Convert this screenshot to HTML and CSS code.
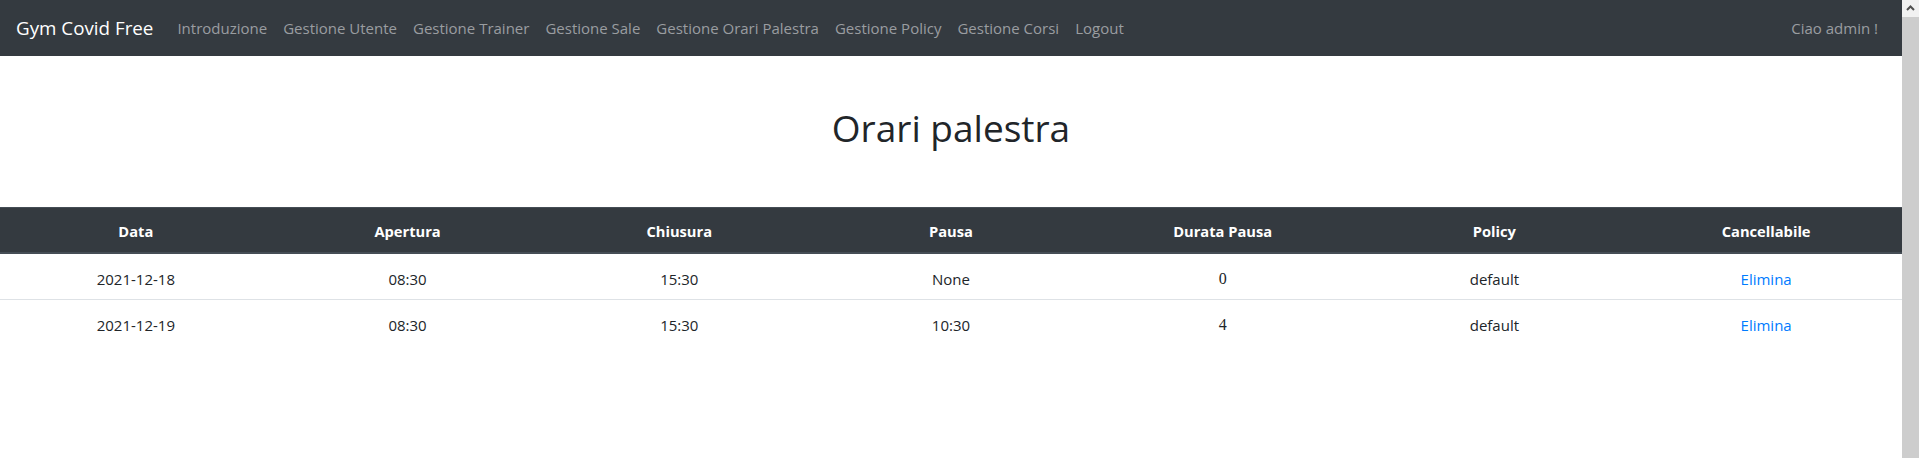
FILE: index.html
```html
<!DOCTYPE html>
<html lang="it">
<head>
<meta charset="utf-8">
<title>Orari palestra</title>
<link rel="stylesheet" href="styles.css">
</head>
<body>
<div class="page">
  <nav class="navbar">
    <a class="brand" href="#">Gym Covid Free</a>
    <ul class="nav">
      <li><a class="nav-link" href="#">Introduzione</a></li>
      <li><a class="nav-link" href="#">Gestione Utente</a></li>
      <li><a class="nav-link" href="#">Gestione Trainer</a></li>
      <li><a class="nav-link" href="#">Gestione Sale</a></li>
      <li><a class="nav-link" href="#">Gestione Orari Palestra</a></li>
      <li><a class="nav-link" href="#">Gestione Policy</a></li>
      <li><a class="nav-link" href="#">Gestione Corsi</a></li>
      <li><a class="nav-link" href="#">Logout</a></li>
    </ul>
    <ul class="nav nav-right">
      <li><span class="nav-link">Ciao admin !</span></li>
    </ul>
  </nav>

  <section class="title-block">
    <h1 class="title">Orari palestra</h1>
  </section>

  <table class="table">
    <thead>
      <tr>
        <th>Data</th>
        <th>Apertura</th>
        <th>Chiusura</th>
        <th>Pausa</th>
        <th>Durata Pausa</th>
        <th>Policy</th>
        <th>Cancellabile</th>
      </tr>
    </thead>
    <tbody>
      <tr>
        <td>2021-12-18</td>
        <td>08:30</td>
        <td>15:30</td>
        <td>None</td>
        <td class="num">0</td>
        <td>default</td>
        <td><a class="link" href="#">Elimina</a></td>
      </tr>
      <tr>
        <td>2021-12-19</td>
        <td>08:30</td>
        <td>15:30</td>
        <td>10:30</td>
        <td class="num">4</td>
        <td>default</td>
        <td><a class="link" href="#">Elimina</a></td>
      </tr>
    </tbody>
  </table>
</div>
<div class="scrollbar" aria-hidden="true">
  <div class="scroll-btn">
    <svg width="17" height="17" viewBox="0 0 17 17"><path d="M5 10 L8.5 6.5 L12 10" fill="none" stroke="#505050" stroke-width="2"/></svg>
  </div>
  <div class="scroll-thumb"></div>
</div>
</body>
</html>
```

FILE: styles.css
```css
body {
  margin: 0;
  display: flex;
  min-height: 458px;
  font-family: "Open Sans", "Noto Sans", sans-serif;
  font-size: 15px;
  line-height: 24px;
  color: #212529;
  background: #fff;
}

.page {
  flex: 1;
  min-width: 0;
}

.scrollbar {
  width: 17px;
  display: flex;
  flex-direction: column;
  background: #f1f1f1;
}

.scroll-btn {
  height: 17px;
}

.scroll-btn svg {
  display: block;
}

.scroll-thumb {
  flex: 1;
  background: #cdcdcd;
}

.navbar {
  display: flex;
  align-items: center;
  height: 56px;
  box-sizing: border-box;
  padding: 8px 16px;
  background: #343a40;
}

.brand {
  font-size: 18.8px;
  line-height: 30px;
  padding: 5px 0;
  margin-right: 16px;
  color: #fff;
  text-decoration: none;
}

.nav {
  display: flex;
  list-style: none;
  margin: 0;
  padding: 0;
}

.nav-right {
  margin-left: auto;
}

.nav-link {
  display: block;
  padding: 8px;
  color: #9a9da0;
  text-decoration: none;
}

.title-block {
  padding: 48px 0 8px;
}

.title {
  margin: 0;
  text-align: center;
  font-weight: 400;
  font-size: 37px;
  line-height: 48px;
  color: #212529;
}

.table {
  width: 100%;
  margin-top: 47px;
  border-collapse: collapse;
  table-layout: fixed;
}

.table th {
  background: #343a40;
  color: #fff;
  font-weight: 700;
  font-size: 14.7px;
  padding: 11px 0 9px;
  text-align: center;
  border-top: 1px solid #454d55;
  border-bottom: 2px solid #454d55;
}

.table td {
  font-size: 15px;
  padding: 13px 0 8px;
  text-align: center;
  color: #212529;
}

.table tbody tr + tr td {
  border-top: 1px solid #dee2e6;
}

.table td.num {
  font-family: "Liberation Serif", "Times New Roman", serif;
  font-size: 16px;
}

.link {
  color: #007bff;
  text-decoration: none;
}
```
